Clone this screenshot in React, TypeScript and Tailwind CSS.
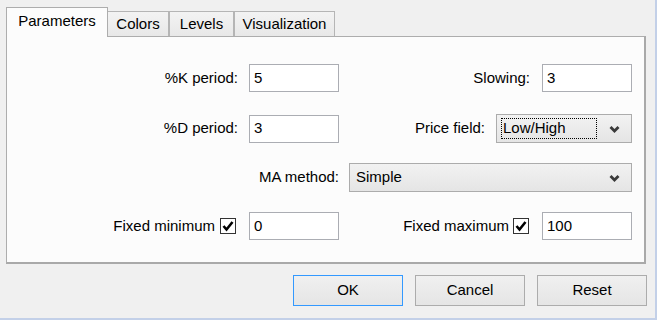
const font = { fontFamily: '"Liberation Sans", Arial, sans-serif' };

const Chevron = () => (
  <svg width="11" height="8" viewBox="0 0 11 8" className="shrink-0">
    <polyline points="1.5,2 5.5,6 9.5,2" fill="none" stroke="#3a3a3a" strokeWidth="2.8" />
  </svg>
);

const TextBox = ({ value }: { value: string }) => (
  <div className="w-[90px] h-[28px] border border-[#abadb3] bg-white flex items-center pl-[4px] text-[15px] text-black">
    {value}
  </div>
);

const Select = ({ value, width, focused }: { value: string; width: string; focused?: boolean }) => (
  <div
    className={`${width} h-[29px] border border-[#acacac] bg-gradient-to-b from-[#f2f2f2] to-[#e5e5e5] flex items-center text-[15px] text-black`}
  >
    <div className="flex-1 flex items-center h-full py-[3px] pl-[4px]">
      {focused ? (
        <div className="h-full w-full border border-dotted border-black flex items-center pl-[1px]">{value}</div>
      ) : (
        <div className="pl-[2px]">{value}</div>
      )}
    </div>
    <div className="w-[34px] flex justify-center">
      <Chevron />
    </div>
  </div>
);

const CheckBox = () => (
  <div className="w-[16px] h-[16px] border border-[#333] bg-white flex items-center justify-center">
    <svg width="14" height="14" viewBox="0 0 14 14">
      <polyline points="2.5,7 5.5,10.5 11.5,3" fill="none" stroke="#000" strokeWidth="2.6" />
    </svg>
  </div>
);

const Button = ({ label, primary }: { label: string; primary?: boolean }) => (
  <button
    className={`h-[31px] w-[110px] text-[15px] text-black bg-gradient-to-b from-[#f0f0f0] to-[#e5e5e5] border ${
      primary ? 'border-[#3399ff]' : 'border-[#acacac]'
    }`}
  >
    {label}
  </button>
);

export default function App() {
  const tabs = ['Colors', 'Levels', 'Visualization'];

  return (
    <div
      style={font}
      className="w-[657px] h-[320px] bg-[#f0f0f0] border-r-2 border-b-2 border-[#c3d0e8] overflow-hidden text-[15px] text-black"
    >
      {/* Tabs */}
      <div className="flex items-end pl-[6px] pt-[7px] h-[37px] relative z-10">
        <div className="h-[30px] w-[102px] bg-[#fcfcfc] border border-b-0 border-[#adadad] flex items-center justify-center pb-[3px]">
          Parameters
        </div>
        {tabs.map((t, i) => (
          <div
            key={t}
            className={`h-[25px] px-[7px] bg-gradient-to-b from-[#f3f3f3] to-[#e8e8e8] border border-b-0 border-[#b5b5b5] flex items-center ${
              i === 0 ? 'border-l-0' : ''
            } ${i === 0 ? 'w-[61px]' : i === 1 ? 'w-[65px]' : 'w-[101px]'} justify-center mb-[1px]`}
          >
            {t}
          </div>
        ))}
      </div>

      {/* Panel */}
      <div className="ml-[6px] w-[640px] -mt-[1px] bg-[#fcfcfc] border-l border-t border-[#adadad] border-r-2 border-b-2 border-r-[#a9a9a9] border-b-[#a9a9a9] pt-[27px] pb-[22px]">
        <div className="flex items-center">
          <div className="w-[242px] text-right pr-[11px]">%K period:</div>
          <TextBox value="5" />
          <div className="w-[203px] text-right pr-[12px]">Slowing:</div>
          <TextBox value="3" />
        </div>

        <div className="flex items-center mt-[22px]">
          <div className="w-[242px] text-right pr-[11px]">%D period:</div>
          <TextBox value="3" />
          <div className="w-[157px] text-right pr-[11px]">Price field:</div>
          <Select value="Low/High" width="w-[136px]" focused />
        </div>

        <div className="flex items-center mt-[20px]">
          <div className="w-[342px] text-right pr-[10px]">MA method:</div>
          <Select value="Simple" width="w-[283px]" />
        </div>

        <div className="flex items-center mt-[20px]">
          <div className="w-[208px] text-right">Fixed minimum</div>
          <div className="ml-[5px]">
            <CheckBox />
          </div>
          <div className="ml-[13px]">
            <TextBox value="0" />
          </div>
          <div className="w-[170px] text-right">Fixed maximum</div>
          <div className="ml-[4px]">
            <CheckBox />
          </div>
          <div className="ml-[13px]">
            <TextBox value="100" />
          </div>
        </div>
      </div>

      {/* Buttons */}
      <div className="flex justify-end gap-[12px] pr-[8px] mt-[11px]">
        <Button label="OK" primary />
        <Button label="Cancel" />
        <Button label="Reset" />
      </div>
    </div>
  );
}
